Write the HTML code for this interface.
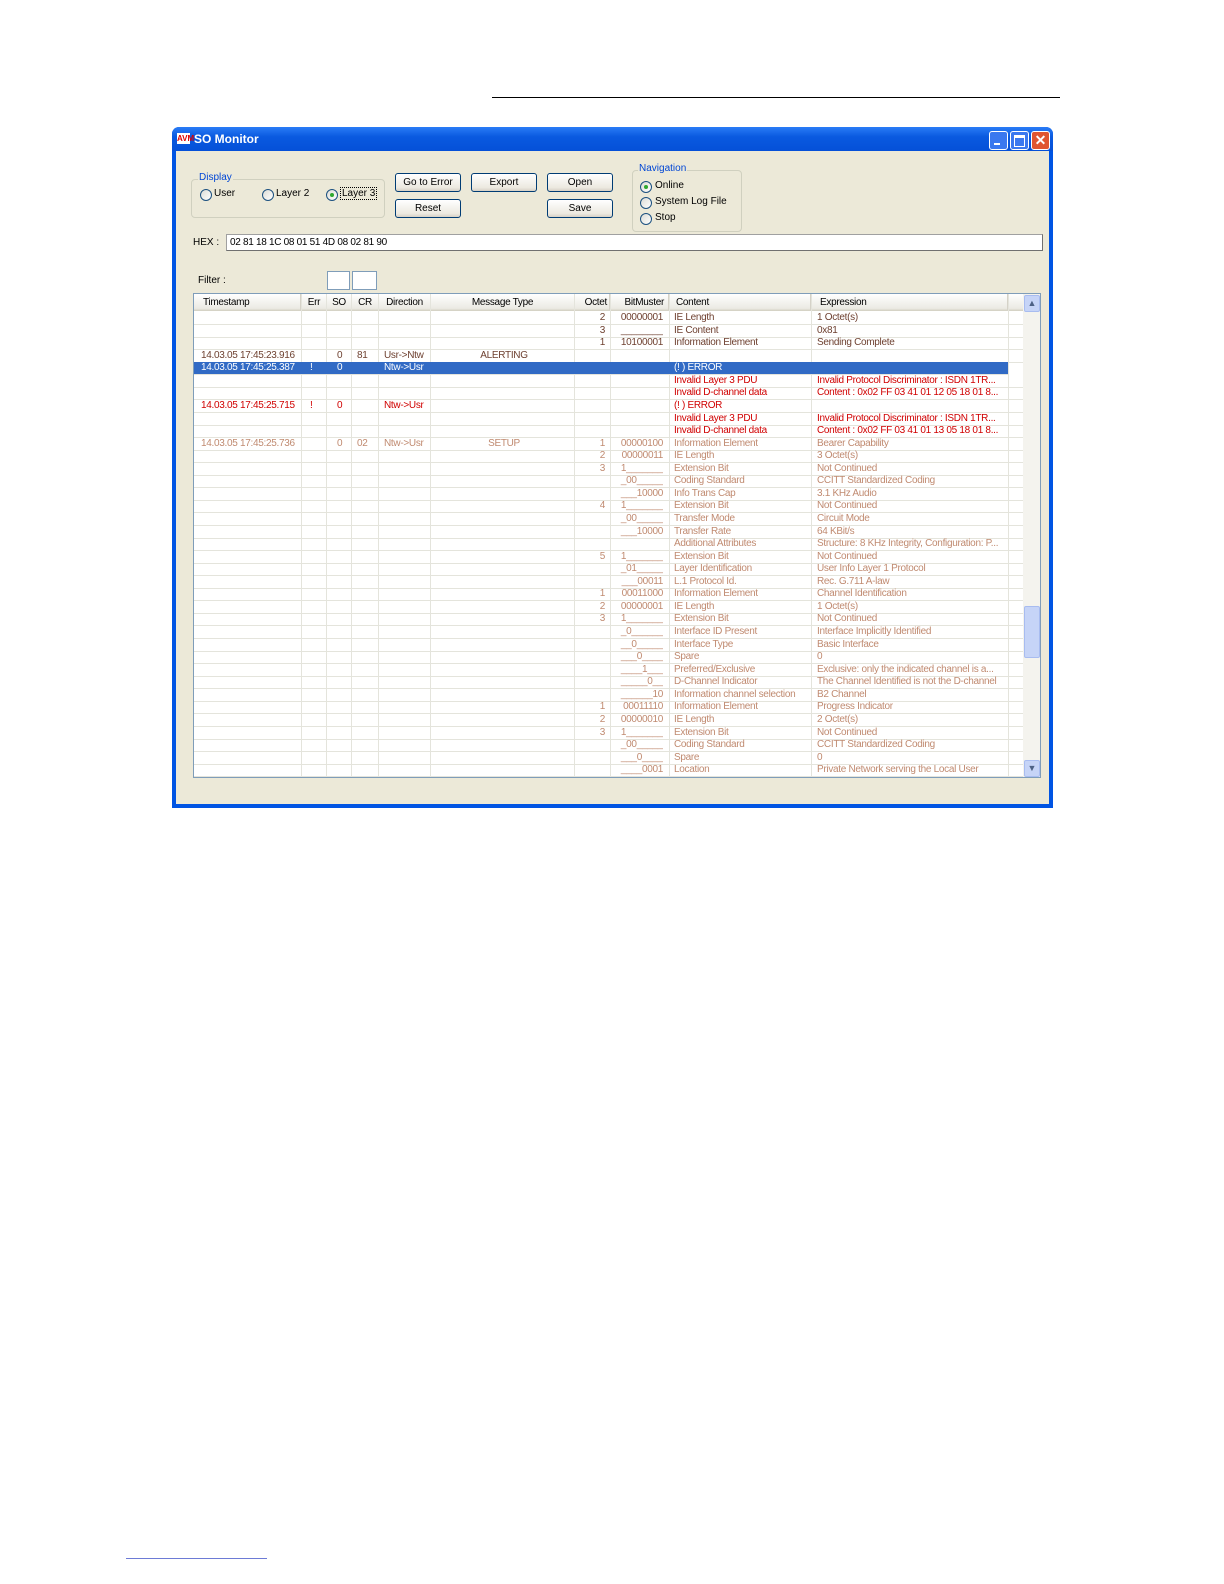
<!DOCTYPE html>
<html><head><meta charset="utf-8"><style>
body{margin:0;width:1224px;height:1584px;background:#fff;position:relative;font-family:"Liberation Sans",sans-serif;overflow:hidden}
.a{position:absolute}
.win{left:172px;top:127px;width:881px;height:681px;background:#0054e3;border-radius:7px 7px 0 0}
.title{left:0;top:0;width:881px;height:24px;background:linear-gradient(#2a7cf6,#0a5ae0 40%,#0550d8);border-radius:7px 7px 0 0;color:#fff;font-weight:bold;font-size:12px}
.body{left:4px;top:24px;width:873px;height:653px;background:#ece9d8}
.btn{position:absolute;height:17px;border:1px solid #003c74;border-radius:3px;background:linear-gradient(#fff,#ece9e0 80%,#d6d0c5);font-size:10px;text-align:center;line-height:17px;color:#000}
.rad{position:absolute;width:10px;height:10px;border:1px solid #1c5180;border-radius:50%;background:linear-gradient(135deg,#dcdcd5,#fff)}
.dot:after{content:"";position:absolute;left:3px;top:3px;width:4px;height:4px;border-radius:50%;background:#2fa82f}
.lbl{position:absolute;font-size:10px;color:#000}
.grp{position:absolute;border:1px solid #d0d0bf;border-radius:4px}
.gt{position:absolute;font-size:10px;color:#0046d5;background:#ece9d8;padding:0 1px}
.grid{left:193px;top:293px;width:846px;height:483px;background:#fff;border:1px solid #7f9db9;overflow:hidden}
.r{position:absolute;left:0;width:829px;height:12px;border-bottom:1px solid #e4e4dc;font-size:10px;line-height:12px;letter-spacing:-0.3px;white-space:nowrap}
.r span{position:absolute;top:0;overflow:hidden}
.vl{position:absolute;top:0;width:1px;height:483px;background:#e4e4dc}
.d{color:#6e4030}.l{color:#c08a70}.e{color:#d00000}.s{background:#316ac5;color:#fff}
.c1{left:7px;width:105px}.c2{left:116px;width:10px}.c3{left:143px;width:10px}.c4{left:163px;width:20px}.c5{left:190px;width:50px}
.c6{left:240px;width:140px;text-align:center}.c7{left:381px;width:30px;text-align:right}.c8{left:417px;width:52px;text-align:right}
.c9{left:480px;width:135px}.c10{left:623px;width:195px}
.hd{position:absolute;top:0;height:17px;font-size:10px;line-height:17px;border-right:1px solid #d5d2c8;background:linear-gradient(#fff,#ebeae3 85%,#d0cdbf);letter-spacing:-0.3px}
</style></head><body>
<div class="a" style="left:492px;top:97px;width:568px;height:1px;background:#000"></div>
<div class="a" style="left:126px;top:1558px;width:141px;height:1px;background:#6d7bd6"></div>

<div class="a win">
 <div class="a title">
  <div class="a" style="left:5px;top:6px;width:13px;height:11px;background:#fff;color:#d00;font-size:8px;line-height:11px;font-weight:bold;text-align:center">AVM</div>
  <div class="a" style="left:22px;top:5px">SO Monitor</div>
  <div class="a" style="left:817px;top:4px;width:17px;height:17px;border:1px solid #fff;border-radius:3px;background:#3a78ef"><div class="a" style="left:4px;top:11px;width:6px;height:2px;background:#fff"></div></div>
  <div class="a" style="left:838px;top:4px;width:17px;height:17px;border:1px solid #fff;border-radius:3px;background:#3a78ef"><div class="a" style="left:3px;top:3px;width:9px;height:8px;border:1px solid #fff;border-top-width:3px"></div></div>
  <div class="a" style="left:859px;top:4px;width:17px;height:17px;border:1px solid #fff;border-radius:3px;background:#e05530;color:#fff;font-size:14px;line-height:17px;text-align:center">✕</div>
 </div>
 <div class="a body">
  <div class="grp" style="left:15px;top:28px;width:192px;height:37px"></div>
  <div class="gt" style="left:22px;top:21px">Display</div>
  <div class="rad" style="left:24px;top:38px"></div><div class="lbl" style="left:38px;top:37px">User</div>
  <div class="rad" style="left:86px;top:38px"></div><div class="lbl" style="left:100px;top:37px">Layer 2</div>
  <div class="rad dot" style="left:150px;top:38px"></div><div class="lbl" style="left:164px;top:36px;border:1px dotted #000;padding:0 1px">Layer 3</div>
  <div class="btn" style="left:219px;top:22px;width:64px">Go to Error</div>
  <div class="btn" style="left:219px;top:48px;width:64px">Reset</div>
  <div class="btn" style="left:295px;top:22px;width:64px">Export</div>
  <div class="btn" style="left:371px;top:22px;width:64px">Open</div>
  <div class="btn" style="left:371px;top:48px;width:64px">Save</div>
  <div class="grp" style="left:456px;top:19px;width:108px;height:60px"></div>
  <div class="gt" style="left:462px;top:12px">Navigation</div>
  <div class="rad dot" style="left:464px;top:30px"></div><div class="lbl" style="left:479px;top:29px">Online</div>
  <div class="rad" style="left:464px;top:46px"></div><div class="lbl" style="left:479px;top:45px">System Log File</div>
  <div class="rad" style="left:464px;top:62px"></div><div class="lbl" style="left:479px;top:61px">Stop</div>
  <div class="lbl" style="left:17px;top:86px">HEX :</div>
  <div class="a" style="left:50px;top:83px;width:812px;height:15px;background:#fff;border:1px solid #a0a0a0;border-right-color:#707070;border-bottom-color:#707070;font-size:10px;line-height:15px;padding-left:3px;letter-spacing:-0.3px">02 81 18 1C 08 01 51 4D 08 02 81 90</div>
  <div class="lbl" style="left:22px;top:124px">Filter :</div>
  <div class="a" style="left:151px;top:120px;width:21px;height:17px;background:#fff;border:1px solid #7f9db9"></div>
  <div class="a" style="left:176px;top:120px;width:23px;height:17px;background:#fff;border:1px solid #7f9db9"></div>
 </div>
</div>

<div class="a grid">
 <div class="hd" style="left:0;width:107px;padding-left:9px;box-sizing:border-box">Timestamp</div>
 <div class="hd" style="left:108px;width:24px;text-align:center">Err</div>
 <div class="hd" style="left:133px;width:24px;text-align:center">SO</div>
 <div class="hd" style="left:158px;width:26px;text-align:center">CR</div>
 <div class="hd" style="left:185px;width:51px;text-align:center">Direction</div>
 <div class="hd" style="left:237px;width:143px;text-align:center">Message Type</div>
 <div class="hd" style="left:381px;width:35px;text-align:right;padding-right:2px;box-sizing:border-box">Octet</div>
 <div class="hd" style="left:417px;width:58px;text-align:right;padding-right:4px;box-sizing:border-box">BitMuster</div>
 <div class="hd" style="left:476px;width:141px;padding-left:6px;box-sizing:border-box">Content</div>
 <div class="hd" style="left:618px;width:196px;padding-left:8px;box-sizing:border-box">Expression</div>
 <div class="hd" style="left:815px;width:14px;border-right:none"></div>
 <div class="vl" style="left:107px"></div><div class="vl" style="left:132px"></div><div class="vl" style="left:157px"></div><div class="vl" style="left:184px"></div><div class="vl" style="left:236px"></div><div class="vl" style="left:380px"></div><div class="vl" style="left:416px"></div><div class="vl" style="left:475px"></div><div class="vl" style="left:617px"></div><div class="vl" style="left:814px"></div>
 <!-- scrollbar -->
 <div class="a" style="left:829px;top:0;width:17px;height:483px;background:#f4f3ee"></div>
 <div class="a" style="left:830px;top:1px;width:14px;height:15px;background:#c6d4f7;border:1px solid #a8bcf0;border-radius:2px;font-size:9px;text-align:center;color:#4d6185;line-height:15px">▲</div>
 <div class="a" style="left:830px;top:312px;width:14px;height:50px;background:#c6d4f7;border:1px solid #a8bcf0;border-radius:2px"></div>
 <div class="a" style="left:830px;top:466px;width:14px;height:15px;background:#c6d4f7;border:1px solid #a8bcf0;border-radius:2px;font-size:9px;text-align:center;color:#4d6185;line-height:15px">▼</div>

<div class="r d" style="top:18px"><span class="c7">2</span><span class="c8">00000001</span><span class="c9">IE Length</span><span class="c10">1 Octet(s)</span></div>
<div class="r d" style="top:30.6px"><span class="c7">3</span><span class="c8">________</span><span class="c9">IE Content</span><span class="c10">0x81</span></div>
<div class="r d" style="top:43.1px"><span class="c7">1</span><span class="c8">10100001</span><span class="c9">Information Element</span><span class="c10">Sending Complete</span></div>
<div class="r d" style="top:55.7px"><span class="c1">14.03.05 17:45:23.916</span><span class="c3">0</span><span class="c4">81</span><span class="c5">Usr-&gt;Ntw</span><span class="c6">ALERTING</span></div>
<div class="r s" style="top:68.2px;width:814px"><span class="c1">14.03.05 17:45:25.387</span><span class="c2">!</span><span class="c3">0</span><span class="c5">Ntw-&gt;Usr</span><span class="c9">(! ) ERROR</span></div>
<div class="r e" style="top:80.8px"><span class="c9">Invalid Layer 3 PDU</span><span class="c10">Invalid Protocol Discriminator : ISDN 1TR...</span></div>
<div class="r e" style="top:93.4px"><span class="c9">Invalid D-channel data</span><span class="c10">Content : 0x02 FF 03 41 01 12 05 18 01 8...</span></div>
<div class="r e" style="top:105.9px"><span class="c1">14.03.05 17:45:25.715</span><span class="c2">!</span><span class="c3">0</span><span class="c5">Ntw-&gt;Usr</span><span class="c9">(! ) ERROR</span></div>
<div class="r e" style="top:118.5px"><span class="c9">Invalid Layer 3 PDU</span><span class="c10">Invalid Protocol Discriminator : ISDN 1TR...</span></div>
<div class="r e" style="top:131px"><span class="c9">Invalid D-channel data</span><span class="c10">Content : 0x02 FF 03 41 01 13 05 18 01 8...</span></div>
<div class="r l" style="top:143.6px"><span class="c1">14.03.05 17:45:25.736</span><span class="c3">0</span><span class="c4">02</span><span class="c5">Ntw-&gt;Usr</span><span class="c6">SETUP</span><span class="c7">1</span><span class="c8">00000100</span><span class="c9">Information Element</span><span class="c10">Bearer Capability</span></div>
<div class="r l" style="top:156.2px"><span class="c7">2</span><span class="c8">00000011</span><span class="c9">IE Length</span><span class="c10">3 Octet(s)</span></div>
<div class="r l" style="top:168.7px"><span class="c7">3</span><span class="c8">1_______</span><span class="c9">Extension Bit</span><span class="c10">Not Continued</span></div>
<div class="r l" style="top:181.3px"><span class="c8">_00_____</span><span class="c9">Coding Standard</span><span class="c10">CCITT Standardized Coding</span></div>
<div class="r l" style="top:193.8px"><span class="c8">___10000</span><span class="c9">Info Trans Cap</span><span class="c10">3.1 KHz Audio</span></div>
<div class="r l" style="top:206.4px"><span class="c7">4</span><span class="c8">1_______</span><span class="c9">Extension Bit</span><span class="c10">Not Continued</span></div>
<div class="r l" style="top:219px"><span class="c8">_00_____</span><span class="c9">Transfer Mode</span><span class="c10">Circuit Mode</span></div>
<div class="r l" style="top:231.5px"><span class="c8">___10000</span><span class="c9">Transfer Rate</span><span class="c10">64 KBit/s</span></div>
<div class="r l" style="top:244.1px"><span class="c9">Additional Attributes</span><span class="c10">Structure: 8 KHz Integrity, Configuration: P...</span></div>
<div class="r l" style="top:256.6px"><span class="c7">5</span><span class="c8">1_______</span><span class="c9">Extension Bit</span><span class="c10">Not Continued</span></div>
<div class="r l" style="top:269.2px"><span class="c8">_01_____</span><span class="c9">Layer Identification</span><span class="c10">User Info Layer 1 Protocol</span></div>
<div class="r l" style="top:281.8px"><span class="c8">___00011</span><span class="c9">L.1 Protocol Id.</span><span class="c10">Rec. G.711 A-law</span></div>
<div class="r l" style="top:294.3px"><span class="c7">1</span><span class="c8">00011000</span><span class="c9">Information Element</span><span class="c10">Channel Identification</span></div>
<div class="r l" style="top:306.9px"><span class="c7">2</span><span class="c8">00000001</span><span class="c9">IE Length</span><span class="c10">1 Octet(s)</span></div>
<div class="r l" style="top:319.4px"><span class="c7">3</span><span class="c8">1_______</span><span class="c9">Extension Bit</span><span class="c10">Not Continued</span></div>
<div class="r l" style="top:332px"><span class="c8">_0______</span><span class="c9">Interface ID Present</span><span class="c10">Interface Implicitly Identified</span></div>
<div class="r l" style="top:344.6px"><span class="c8">__0_____</span><span class="c9">Interface Type</span><span class="c10">Basic Interface</span></div>
<div class="r l" style="top:357.1px"><span class="c8">___0____</span><span class="c9">Spare</span><span class="c10">0</span></div>
<div class="r l" style="top:369.7px"><span class="c8">____1___</span><span class="c9">Preferred/Exclusive</span><span class="c10">Exclusive: only the indicated channel is a...</span></div>
<div class="r l" style="top:382.2px"><span class="c8">_____0__</span><span class="c9">D-Channel Indicator</span><span class="c10">The Channel Identified is not the D-channel</span></div>
<div class="r l" style="top:394.8px"><span class="c8">______10</span><span class="c9">Information channel selection</span><span class="c10">B2 Channel</span></div>
<div class="r l" style="top:407.4px"><span class="c7">1</span><span class="c8">00011110</span><span class="c9">Information Element</span><span class="c10">Progress Indicator</span></div>
<div class="r l" style="top:419.9px"><span class="c7">2</span><span class="c8">00000010</span><span class="c9">IE Length</span><span class="c10">2 Octet(s)</span></div>
<div class="r l" style="top:432.5px"><span class="c7">3</span><span class="c8">1_______</span><span class="c9">Extension Bit</span><span class="c10">Not Continued</span></div>
<div class="r l" style="top:445px"><span class="c8">_00_____</span><span class="c9">Coding Standard</span><span class="c10">CCITT Standardized Coding</span></div>
<div class="r l" style="top:457.6px"><span class="c8">___0____</span><span class="c9">Spare</span><span class="c10">0</span></div>
<div class="r l" style="top:470.2px"><span class="c8">____0001</span><span class="c9">Location</span><span class="c10">Private Network serving the Local User</span></div>
</div>
</body></html>
